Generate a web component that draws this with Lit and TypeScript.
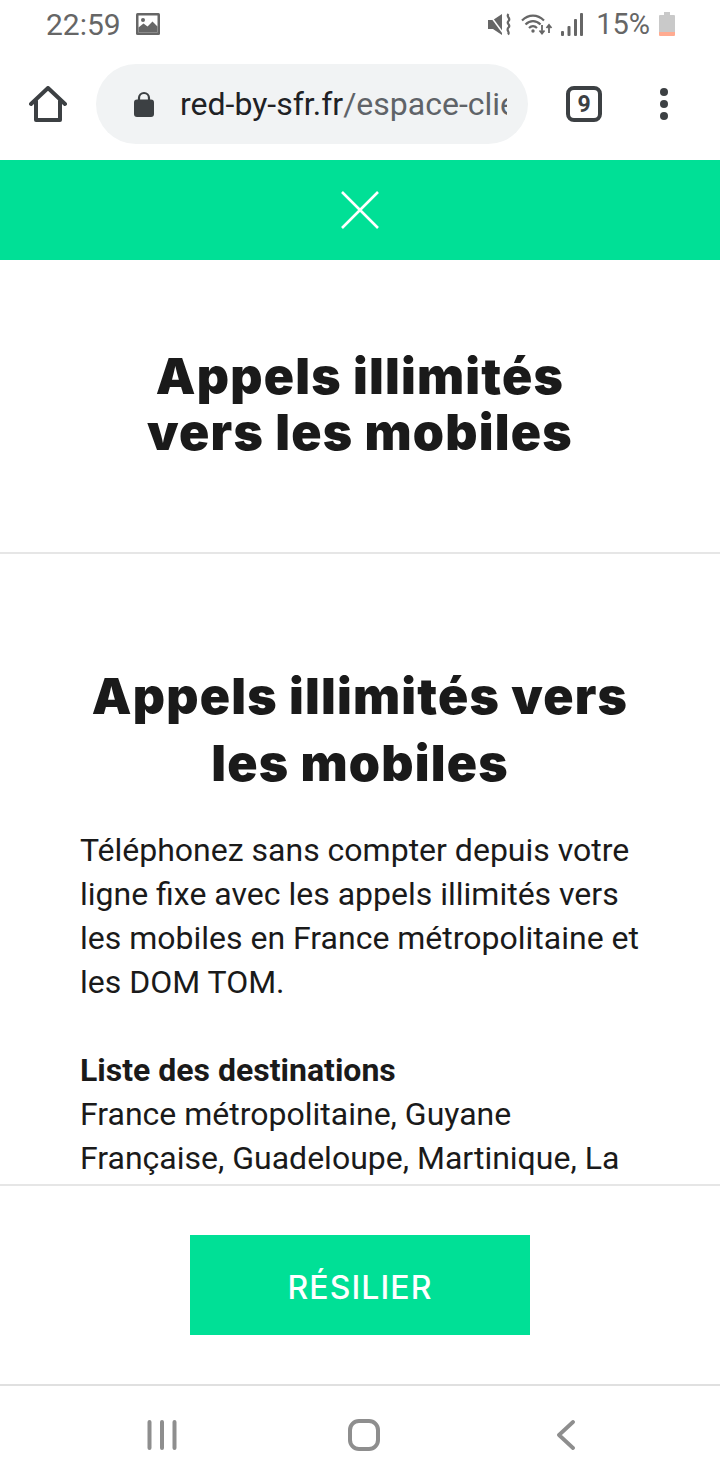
import { LitElement, html, css, svg } from 'lit';
import { customElement } from 'lit/decorators.js';

const imageIcon = svg`<svg width="24" height="22" viewBox="0 0 24 22"><rect width="24" height="22" rx="1.5" fill="#666"/><rect x="2.5" y="2.5" width="19" height="17" fill="#fff"/><circle cx="7" cy="7" r="2" fill="#666"/><path d="M2.500 19.500v-5l5-4 4 3 5-5 5 5v6z" fill="#666"/></svg>`;
const muteIcon = svg`<svg width="24" height="23" viewBox="0 0 24 23"><path d="M0 7h5l9-6v21l-9-6H0z" fill="#666"/><path d="M1 1 15 20" stroke="#fff" stroke-width="1.500"/><path d="M20.500 1c-3 3 3 4 0 7s3 3.500 0 6.500 2 4.500-.5 7" fill="none" stroke="#666" stroke-width="2.200"/></svg>`;
const wifiIcon = svg`<svg width="32" height="22" viewBox="0 0 32 22" fill="none" stroke="#666" stroke-width="2.200"><path d="M1 7.500c6.500-6.500 15.500-6.500 22 0"/><path d="M4.500 11.500c4.500-4.500 10.500-4.500 15 0"/><path d="M8 15c2.500-2.500 5.500-2.500 8 0"/><circle cx="12" cy="18" r="1.700" fill="#666" stroke="none"/><path d="M21 12v8M18.500 17.500l2.500 3 2.500-3" stroke-width="1.800"/><path d="M28 20v-8M25.500 15l2.500-3 2.500 3" stroke-width="1.800"/></svg>`;
const signalIcon = svg`<svg width="22" height="23" viewBox="0 0 22 23" fill="#666"><rect x="0" y="18" width="3" height="5" rx="1"/><rect x="6.500" y="13" width="3" height="10" rx="1"/><rect x="13" y="6" width="3" height="17" rx="1"/><rect x="19" y="0" width="3" height="23" rx="1"/></svg>`;
const batteryIcon = svg`<svg width="16" height="24" viewBox="0 0 16 24"><path d="M5 0h6v3h4a1 1 0 0 1 1 1v16H0V4a1 1 0 0 1 1-1h4z" fill="#c9c9c9"/><path d="M0 20h16v3a1 1 0 0 1-1 1H1a1 1 0 0 1-1-1z" fill="#ffab91"/></svg>`;
const homeIcon = svg`<svg width="38" height="36" viewBox="0 0 38 36" fill="none" stroke="#3c4043" stroke-width="4" stroke-linejoin="round" stroke-linecap="round"><path d="M2 18 19 2l17 16"/><path d="M7 15v19h24V15"/></svg>`;
const lockIcon = svg`<svg width="20" height="26" viewBox="0 0 20 26"><path d="M5 10V7a5 5 0 0 1 10 0v3" fill="none" stroke="#3c4043" stroke-width="2.200"/><rect y="8.500" width="20" height="17.500" rx="3" fill="#3c4043"/></svg>`;
const closeIcon = svg`<svg width="38" height="38" viewBox="0 0 38 38" stroke="#fff" stroke-width="2.600"><path d="M1 1l36 36M37 1 1 37"/></svg>`;
const recentsIcon = svg`<svg width="30" height="30" viewBox="0 0 30 30" stroke="#8e8e8e" stroke-width="4" stroke-linecap="round"><path d="M2.500 2v26M15 2v26M27.500 2v26"/></svg>`;
const homeNavIcon = svg`<svg width="32" height="32" viewBox="0 0 32 32" fill="none" stroke="#8e8e8e" stroke-width="4"><rect x="2" y="2" width="28" height="28" rx="9"/></svg>`;
const backIcon = svg`<svg width="18" height="30" viewBox="0 0 18 30" fill="none" stroke="#8e8e8e" stroke-width="3.800" stroke-linecap="round" stroke-linejoin="round"><path d="M16 2 2 15l14 13"/></svg>`;

@customElement('app-root')
export class AppRoot extends LitElement {
  static override styles = css`
    :host {
      display: flex;
      flex-direction: column;
      width: 720px;
      height: 1480px;
      background: #fff;
      font-family: Roboto, sans-serif;
      color: #1a1a1a;
      overflow: hidden;
    }
    .status {
      height: 48px;
      flex: none;
      display: flex;
      align-items: center;
      padding: 0 45px 0 46px;
      color: #666;
      font-size: 30px;
    }
    .status .time {
      margin-right: 15px;
    }
    .status .right {
      margin-left: auto;
      display: flex;
      align-items: center;
    }
    .status svg {
      display: block;
    }
    .status .mute {
      margin-right: 9px;
    }
    .status .wifi {
      margin-right: 8px;
    }
    .status .pct {
      margin: 0 9px 0 13px;
      font-size: 29px;
    }
    .toolbar {
      height: 112px;
      flex: none;
      display: flex;
      align-items: center;
      padding-left: 29px;
      box-sizing: border-box;
    }
    .toolbar svg {
      display: block;
    }
    .pill {
      width: 432px;
      height: 80px;
      margin-left: 29px;
      box-sizing: border-box;
      border-radius: 40px;
      background: #f1f3f4;
      display: flex;
      align-items: center;
      padding: 0 21px 0 38px;
      font-size: 32px;
    }
    .url {
      margin-left: 26px;
      white-space: nowrap;
      overflow: hidden;
      flex: 1;
      color: #5f6368;
    }
    .url b {
      font-weight: 400;
      color: #202124;
    }
    .tabs {
      width: 36px;
      height: 36px;
      box-sizing: border-box;
      border: 4px solid #3c4043;
      border-radius: 8px;
      margin-left: 38px;
      display: flex;
      align-items: center;
      justify-content: center;
      font: 700 23px Roboto, sans-serif;
      color: #3c4043;
    }
    .dots {
      margin-left: 58px;
      display: flex;
      flex-direction: column;
      gap: 4px;
    }
    .dots i {
      width: 8px;
      height: 8px;
      border-radius: 50%;
      background: #3c4043;
    }
    .banner {
      height: 100px;
      flex: none;
      background: #00e096;
      display: flex;
      align-items: center;
      justify-content: center;
    }
    .modal-head {
      height: 294px;
      flex: none;
      box-sizing: border-box;
      border-bottom: 2px solid #e6e6e6;
      display: flex;
      align-items: center;
      justify-content: center;
    }
    h1, h2 {
      margin: 0;
      font-family: Inter, sans-serif;
      font-size: 50px;
      font-weight: 900;
      letter-spacing: 1.2px;
      text-align: center;
      color: #1a1a1a;
    }
    h1 {
      line-height: 56px;
      position: relative;
      top: -2px;
    }
    h2 {
      line-height: 67px;
    }
    .scroll {
      height: 630px;
      flex: none;
      overflow: hidden;
      box-sizing: border-box;
      padding: 109px 80px 0;
    }
    p {
      margin: 31px 0 44px;
      font-size: 32px;
      line-height: 44px;
    }
    p + p {
      margin-top: 0;
    }
    p b {
      font-weight: 700;
    }
    .footer {
      height: 202px;
      flex: none;
      box-sizing: border-box;
      border-top: 2px solid #e6e6e6;
      border-bottom: 2px solid #e0e0e0;
      display: flex;
      align-items: center;
      justify-content: center;
    }
    .btn {
      width: 340px;
      height: 100px;
      background: #00e096;
      color: #fff;
      font-family: Inter, sans-serif;
      font-size: 32px;
      font-weight: 500;
      letter-spacing: 1.1px;
      padding-top: 4px;
      box-sizing: border-box;
      display: flex;
      align-items: center;
      justify-content: center;
    }
    .nav {
      flex: 1;
      display: flex;
      align-items: center;
      padding: 4px 0 0 61px;
    }
    .nav span {
      width: 202px;
      display: flex;
      justify-content: center;
    }
  `;

  override render() {
    return html`
      <div class="status">
        <span class="time">22:59</span>${imageIcon}
        <div class="right">
          <span class="mute">${muteIcon}</span>
          <span class="wifi">${wifiIcon}</span>
          ${signalIcon}
          <span class="pct">15%</span>
          ${batteryIcon}
        </div>
      </div>
      <div class="toolbar">
        ${homeIcon}
        <div class="pill">
          ${lockIcon}
          <div class="url"><b>red-by-sfr.fr</b>/espace-client</div>
        </div>
        <div class="tabs">9</div>
        <div class="dots"><i></i><i></i><i></i></div>
      </div>
      <div class="banner">${closeIcon}</div>
      <div class="modal-head">
        <h1>Appels illimités<br />vers les mobiles</h1>
      </div>
      <div class="scroll">
        <h2>Appels illimités vers<br />les mobiles</h2>
        <p>
          Téléphonez sans compter depuis votre ligne fixe avec les appels
          illimités vers les mobiles en France métropolitaine et les DOM TOM.
        </p>
        <p>
          <b>Liste des destinations</b><br />
          France métropolitaine, Guyane Française, Guadeloupe, Martinique, La
          Réunion, Mayotte
        </p>
      </div>
      <div class="footer"><div class="btn">RÉSILIER</div></div>
      <div class="nav">
        <span>${recentsIcon}</span>
        <span>${homeNavIcon}</span>
        <span>${backIcon}</span>
      </div>
    `;
  }
}
